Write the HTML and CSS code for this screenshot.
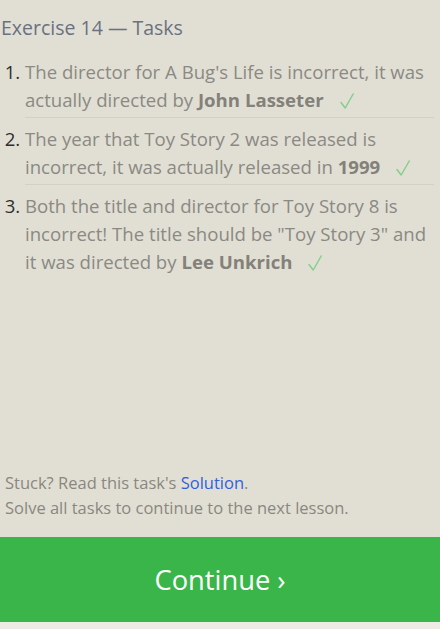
FILE: index.html
```html
<!DOCTYPE html>
<html>
<head>
<meta charset="utf-8">
<link rel="stylesheet" href="styles.css">
</head>
<body>
<div class="page">
  <div class="main">
    <h1 class="title">Exercise 14 — Tasks</h1>
    <ol class="tasks">
      <li class="task">The director for A Bug's Life is incorrect, it was actually directed by <b>John Lasseter</b><svg class="check" viewBox="0 0 14 16" width="14" height="16"><path d="M1 9.5 L5.2 15 L13.2 1"/></svg></li>
      <li class="task">The year that Toy Story 2 was released is incorrect, it was actually released in <b>1999</b><svg class="check" viewBox="0 0 14 16" width="14" height="16"><path d="M1 9.5 L5.2 15 L13.2 1"/></svg></li>
      <li class="task last">Both the title and director for Toy Story 8 is incorrect! The title should be "Toy Story 3" and it was directed by <b>Lee Unkrich</b><svg class="check" viewBox="0 0 14 16" width="14" height="16"><path d="M1 9.5 L5.2 15 L13.2 1"/></svg></li>
    </ol>
  </div>
  <div class="footer">
    <p class="hint">Stuck? Read this task's <a class="link" href="#">Solution</a>.</p>
    <p class="hint">Solve all tasks to continue to the next lesson.</p>
  </div>
  <div class="continue">Continue ›</div>
</div>
</body>
</html>
```

FILE: styles.css
```css
html, body {
  margin: 0;
  padding: 0;
  background: #edebe3;
}
.page {
  height: 622px;
  display: flex;
  flex-direction: column;
  background: #e1dfd4;
  font-family: "Open Sans", "Noto Sans", sans-serif;
}
.main {
  flex: 1;
  padding: 0 6px 0 1px;
}
.title {
  margin: 0;
  padding-top: 14px;
  font-size: 19.5px;
  line-height: 28px;
  font-weight: 400;
  color: #6a7180;
}
.tasks {
  margin: 16px 0 0 0;
  padding: 0 0 0 24px;
  color: #8b8983;
  font-size: 18.6px;
  line-height: 28px;
}
.task {
  padding: 0 0 3px 0;
  margin-bottom: 7px;
  border-bottom: 1px solid #d3d1c6;
}
.task::marker {
  color: #2e2e2e;
}
.task.last {
  border-bottom: none;
}
.task b {
  font-weight: 700;
  color: #838179;
}
.check {
  margin-left: 16px;
  vertical-align: -2px;
  fill: none;
  stroke: #84cf8c;
  stroke-width: 1.5;
  stroke-linecap: round;
  stroke-linejoin: round;
}
.footer {
  padding: 0 0 17px 5px;
}
.hint {
  margin: 0;
  font-size: 16.5px;
  line-height: 25px;
  color: #8a8780;
}
.link {
  color: #2f5fe0;
  text-decoration: none;
}
.continue {
  height: 85px;
  background: #3ab54a;
  color: #ffffff;
  font-size: 27.3px;
  display: flex;
  align-items: center;
  justify-content: center;
}
```
